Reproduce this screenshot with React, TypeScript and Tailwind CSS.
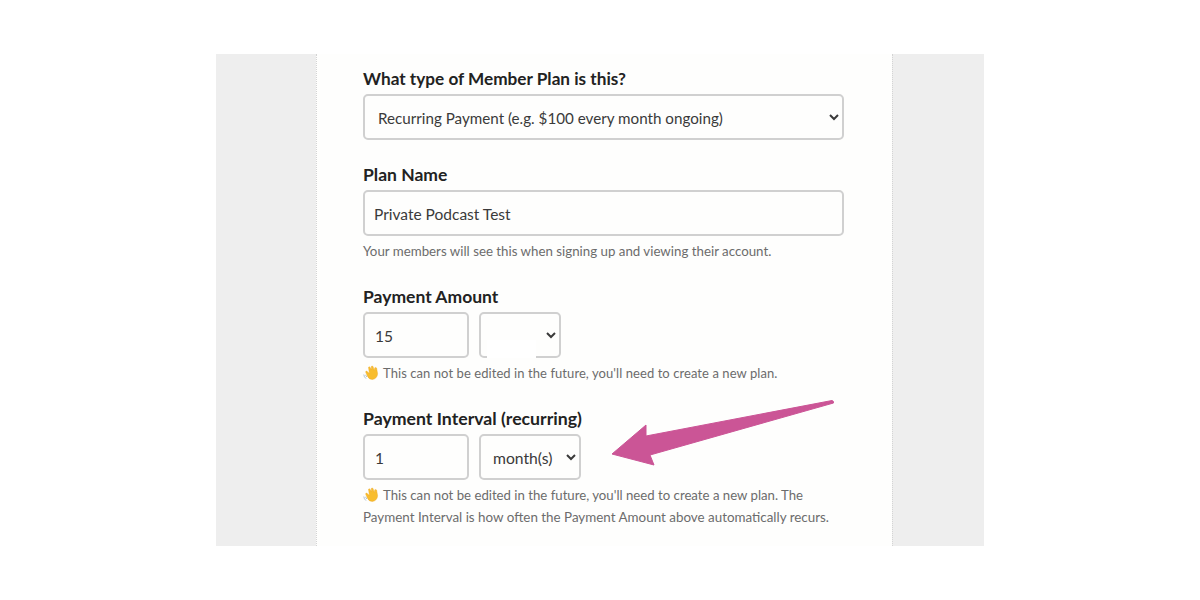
import React from 'react';

const labelCls = 'block leading-[22px] font-bold text-[#222] mb-[4px]';
const fieldCls = 'h-[46px] pt-[2px] rounded-[5px] border-2 border-[#d0d0d0] bg-[#fefefd] text-[#3a3a3a] outline-none';
const helpCls = 'text-[13.3px] leading-[22px] text-[#6c6c6c]';

const Wave = () => (
  <svg width="16" height="15" viewBox="0 0 16 15" className="inline-block align-[-2px] mr-[4px]">
    <path d="M5.5 2.2 Q6.3 1.2 7.2 2.4 L8.6 5 L8.2 1.6 Q8.9 .5 10 1.4 L11.3 5.4 L11.8 2.8 Q12.8 2 13.6 3 L14.6 8.8 Q14.2 13.6 9.6 14.4 Q6 14.6 4.6 11.4 L2.6 7 Q2.8 5.7 4 6.2 L6.4 8.6 Z" fill="#f8bd2e" stroke="#eaa524" strokeWidth="0.4" />
    <path d="M.8 9.5 Q1 12 3 13.6 M2.6 9.8 Q3 11 3.8 12" fill="none" stroke="#a9bccb" strokeWidth="0.9" />
  </svg>
);

const App: React.FC = () => {
  return (
    <div className="w-[1200px] h-[600px] bg-white py-[54px] px-[216px] font-['Lato','Liberation_Sans',sans-serif]">
      <div className="flex h-[492px] bg-[#eeeeee]">
        <div className="w-[100px]" />
        <div className="relative w-[576px] bg-[#fefefd] border-l border-dotted border-[#d4d4d4] pl-[46px] pr-[48px] pt-[14px]">
          <label className={`${labelCls} text-[17.2px]`}>What type of Member Plan is this?</label>
          <select className={`${fieldCls} text-[15.2px] w-full pl-[9px] pr-[6px]`} defaultValue="recurring">
            <option value="recurring">Recurring Payment (e.g. $100 every month ongoing)</option>
          </select>

          <label className={`${labelCls} text-[17.5px] mt-[24px]`}>Plan Name</label>
          <input className={`${fieldCls} text-[15.5px] w-full px-[9px]`} defaultValue="Private Podcast Test" />
          <p className={`${helpCls} mt-[4px]`}>Your members will see this when signing up and viewing their account.</p>

          <label className={`${labelCls} text-[17.5px] mt-[24px]`}>Payment Amount</label>
          <div className="flex gap-[10px]">
            <input className={`${fieldCls} text-[15.5px] w-[106px] px-[10px]`} defaultValue="15" />
            <div className="relative">
              <select className={`${fieldCls} text-[15.5px] w-[82px] pr-[4px]`} />
              <div className="absolute left-[8px] bottom-0 w-[49px] h-[18px] bg-white" />
            </div>
          </div>
          <p className={`${helpCls} mt-[4px] text-[13px] tracking-[0.07px]`}><Wave />This can not be edited in the future, you'll need to create a new plan.</p>

          <label className={`${labelCls} text-[17.7px] mt-[24px]`}>Payment Interval (recurring)</label>
          <div className="flex gap-[10px]">
            <input className={`${fieldCls} text-[15.5px] w-[106px] px-[10px]`} defaultValue="1" />
            <select className={`${fieldCls} text-[15.7px] w-[102px] pl-[8px] pr-[4px]`} defaultValue="month">
              <option value="month">month(s)</option>
            </select>
          </div>
          <p className={`${helpCls} mt-[4px]`}>
            <span className="text-[13.2px]"><Wave />This can not be edited in the future, you'll need to create a new plan. The</span><br />
            <span className="text-[13.4px]">Payment Interval is how often the Payment Amount above automatically recurs.</span>
          </p>

          <svg width="240" height="80" viewBox="0 0 240 80" className="absolute left-[289px] top-[340px]">
            <path d="M6 60 L40 31 L40 42 L226 6.5 Q228 7 227.5 9 L44 61 L48 71 Z" fill="#cb5596" stroke="#cb5596" strokeWidth="1" strokeLinejoin="round" />
          </svg>
        </div>
        <div className="flex-1 border-l border-dotted border-[#d4d4d4]" />
      </div>
    </div>
  );
};

export default App;
